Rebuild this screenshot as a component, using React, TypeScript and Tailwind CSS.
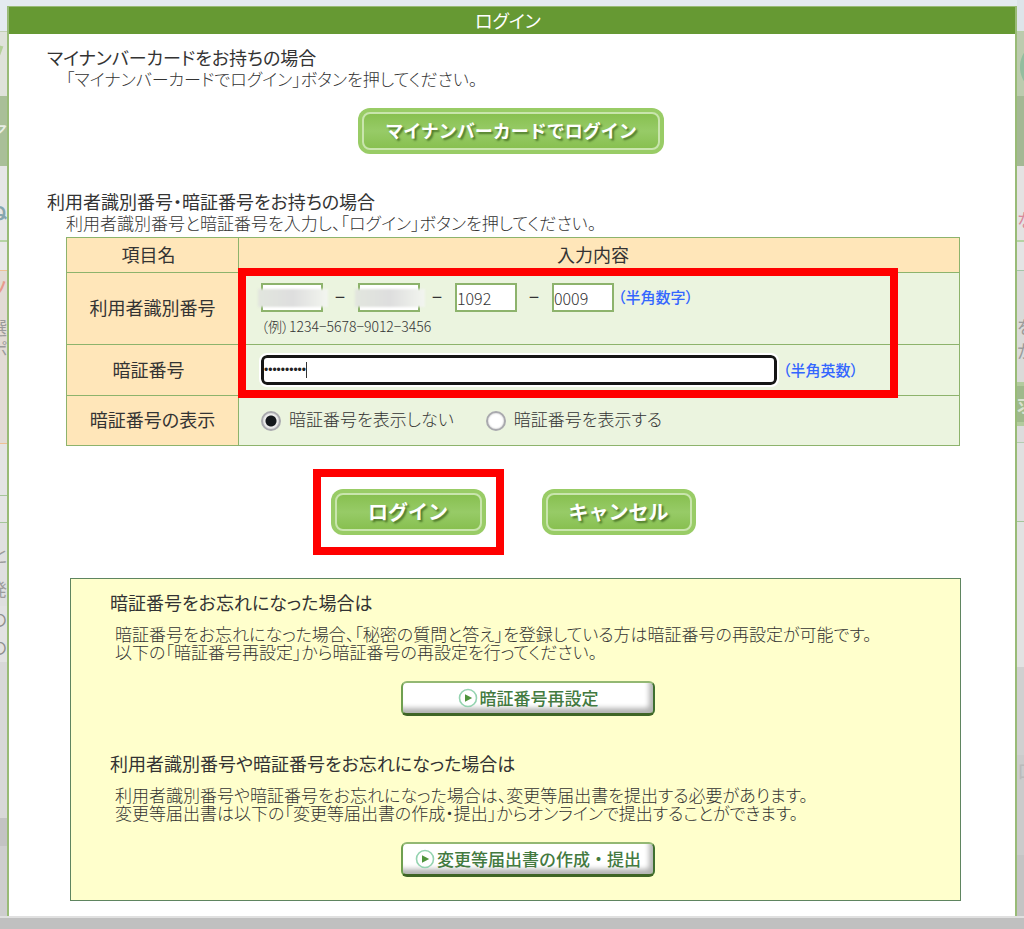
import type { ReactNode } from "react";

type Segment = { box: string; glyph?: string };

const leftEdge: Segment[] = [
  { box: "h-[31px] bg-[#e4ebf0]" },
  { box: "h-[65px] border-t border-[#c3cfb5] bg-[#dfe2da] text-[60px] text-[#b4cf98]", glyph: "ノ" },
  { box: "h-[70px] bg-[#a9bf98] text-[22px] text-[#e8eee4]", glyph: "ア" },
  { box: "h-[74px] bg-[#e6e6e6] pt-[18px] text-[20px] font-bold text-[#86a6ae]", glyph: "ぬ" },
  { box: "h-[30px] border-t-2 border-[#b5d3a4] bg-[#e8e8e8]" },
  { box: "h-[36px] border-t border-[#efc195] bg-[#e2dbd5] text-[24px] text-[#e89a8c]", glyph: "ノ" },
  { box: "h-[32px] bg-[#e2dbd5] pt-[10px] text-[18px] text-[#9a9a9a]", glyph: "選" },
  { box: "h-[22px] bg-[#e2dbd5] text-[18px] text-[#9a9a9a]", glyph: "ポ" },
  { box: "h-[83px] bg-[#e2dbd5]" },
  { box: "h-[52px] border-t border-[#efc195] bg-[#e4e4e4]" },
  { box: "h-[27px] border-t border-[#a5c59a] bg-[#e4e4e4]" },
  { box: "h-[48px] border-t border-[#a5c59a] bg-[#e0e0e0] pt-[16px] text-[17px] text-[#9c9c9c]", glyph: "と" },
  { box: "h-[36px] bg-[#dfdfdf] text-[17px] text-[#9c9c9c]", glyph: "発" },
  { box: "h-[24px] bg-[#e2e2e2] text-[17px] text-[#8f8f8f]", glyph: "の" },
  { box: "h-[32px] bg-[#e2e2e2] text-[17px] text-[#8f8f8f]", glyph: "の" },
  { box: "h-[156px] bg-[#d8d8d8]" },
  { box: "h-[28px] bg-[#c3c3c3]" },
  { box: "grow bg-[#cecece]" },
];

const rightEdge: Segment[] = [
  { box: "h-[31px] bg-[#dde4e9]" },
  { box: "h-[65px] border-t border-[#b9cfa8] bg-[#bccbae] text-[60px] text-[#93bd9f]", glyph: "●" },
  { box: "h-[70px] bg-[#a4b894]" },
  { box: "h-[74px] bg-[#e4e2e2] pt-[32px] text-[18px] text-[#d98a9c]", glyph: "な" },
  { box: "h-[30px] border-t-2 border-[#b5d3a4] bg-[#e4e4e4]" },
  { box: "h-[68px] border-t border-[#a5c5a8] bg-[#dadad8] pt-[42px] text-[18px] text-[#9a9a9a]", glyph: "を" },
  { box: "h-[44px] bg-[#dadad8] pb-[20px] text-[18px] text-[#9a9a9a]", glyph: "か" },
  { box: "h-[44px] border-y-4 border-[#b3cb9e] bg-[#9fb98c] text-[18px] font-bold text-[#d8e2d0]", glyph: "求" },
  { box: "h-[16px] bg-[#dcdcdc]" },
  { box: "h-[79px] border-t border-[#b5cbb0] bg-[#e0e0e0]" },
  { box: "h-[146px] border-t border-[#a5c59a] bg-[#e2e2e2]" },
  { box: "h-[88px] bg-[#d0d0d0]" },
  { box: "h-[32px] bg-[#cbcbcb] text-[20px] text-[#bababa]", glyph: "ロ" },
  { box: "h-[68px] bg-[#cbcbcb]" },
  { box: "grow bg-[#c4c4c4]" },
];

function Edge({ segments, side }: { segments: Segment[]; side: "left" | "right" }) {
  return (
    <div aria-hidden="true" className="flex w-[7px] shrink-0 flex-col overflow-hidden">
      {segments.map((s, i) => (
        <div
          key={i}
          className={`flex shrink-0 items-center overflow-hidden leading-none ${side === "left" ? "justify-end" : "justify-start"} ${s.box}`}
        >
          {s.glyph}
        </div>
      ))}
    </div>
  );
}

function GreenButton({ children, size }: { children: ReactNode; size: string }) {
  return (
    <button type="button" className={`h-[46px] rounded-xl bg-[#99cc66] p-1 ${size}`}>
      <span className="flex h-full items-center justify-center rounded-lg border-2 border-[#c9e5ad] bg-linear-to-b from-[#88c050] via-[#97cb67] to-[#88c050] pb-px font-bold text-white [text-shadow:2px_2px_2px_#4f7a2b]">
        {children}
      </span>
    </button>
  );
}

function PlateButton({ children }: { children: ReactNode }) {
  return (
    <button
      type="button"
      className="mx-auto flex h-[35px] w-[254px] items-center justify-center gap-[2px] rounded-md border-2 border-b-3 border-t-[#93b873] border-r-[#3f7030] border-b-[#3f6526] border-l-[#6fa050] bg-white text-[17px] leading-none font-medium text-[#437a40] shadow-[inset_-4px_-5px_5px_#b5b5b5]"
    >
      <svg viewBox="0 0 20 20" className="size-5" aria-hidden="true">
        <circle cx="10" cy="10" r="8.5" fill="#fff" stroke="#94d3b0" strokeWidth="1.6" />
        <path d="M7 6.2 14.2 10 7 13.8Z" fill="#4f943c" />
      </svg>
      <span className="pb-px">{children}</span>
    </button>
  );
}

function NumberBox({ label, value, masked }: { label: string; value: string; masked?: boolean }) {
  return (
    <span className="relative block">
      <input
        type="text"
        aria-label={label}
        defaultValue={value}
        className="block h-[29px] w-[62px] border-2 border-[#8db36c] bg-white text-[16px] text-[#333] outline-none"
      />
      {masked && (
        <span className="absolute top-[6px] -left-[3px] h-[18px] w-[70px] bg-linear-to-r from-[#e2e6de] via-[#dedede] to-[#f3f6f0] blur-[1px]" />
      )}
    </span>
  );
}

function Dash() {
  return <span className="w-[35px] pr-px pb-1 text-center text-[18px] leading-none font-normal">−</span>;
}

const radioClass =
  "mt-[2px] size-5 shrink-0 appearance-none rounded-full border-2 border-[#a9a9ae] bg-white shadow-[inset_0_0_2px_#bbb] checked:bg-[radial-gradient(circle,#14181c_0_5px,#f0f0f0_6px)]";

const rowHead = "border border-[#8db36c] bg-[#ffe6b9] p-0 pb-[2px] text-center text-[18px] font-normal";
const cell = "border border-[#8db36c] bg-[#ebf4df] p-0 pl-[22px] align-top";

export default function App() {
  return (
    <div className="flex min-h-screen flex-col bg-[#c0c0c0] font-['Noto_Sans_CJK_JP',sans-serif] text-[#333] [font-feature-settings:'palt']">
      <div className="flex bg-[#e4ebf0]">
        <Edge segments={leftEdge} side="left" />
        <main className="mt-[6px] min-w-0 flex-1 border-x-2 border-t border-[#99bb77] bg-white pb-[15px] font-light">
          <h1 className="h-[27px] bg-[#669933] pr-2 text-center text-[18px] leading-[27px] font-normal text-white">
            ログイン
          </h1>

          <section className="pt-[13px] pl-[38px]">
            <h2 className="text-[18px] leading-[21px] font-normal">マイナンバーカードをお持ちの場合</h2>
            <p className="pl-[19px] text-[17px] leading-[21px]">
              「マイナンバーカードでログイン」ボタンを押してください。
            </p>
          </section>
          <div className="mt-[19px] flex justify-center pr-[2px]">
            <GreenButton size="w-[306px] text-[18px] [font-feature-settings:normal]">
              マイナンバーカードでログイン
            </GreenButton>
          </div>

          <section className="mt-[37px] pr-[55px] pl-[38px]">
            <h2 className="text-[18px] leading-[21px] font-normal">
              利用者識別番号・暗証番号をお持ちの場合
            </h2>
            <p className="pl-[19px] text-[17px] leading-[21px]">
              利用者識別番号と暗証番号を入力し、「ログイン」ボタンを押してください。
            </p>
            <div className="relative mt-[4px] ml-[19px]">
              <table className="w-full border-collapse">
                <thead>
                  <tr className="h-[35px]">
                    <th className={`w-[172px] ${rowHead}`}>
                      <span className="pr-2">項目名</span>
                    </th>
                    <th className={rowHead}>
                      <span className="pr-3">入力内容</span>
                    </th>
                  </tr>
                </thead>
                <tbody>
                  <tr className="h-[72px]">
                    <th scope="row" className={rowHead}>利用者識別番号</th>
                    <td className={cell}>
                      <div className="mt-[10px] flex items-center">
                        <NumberBox label="利用者識別番号 1" value="" masked />
                        <Dash />
                        <NumberBox label="利用者識別番号 2" value="" masked />
                        <Dash />
                        <NumberBox label="利用者識別番号 3" value="1092" />
                        <Dash />
                        <NumberBox label="利用者識別番号 4" value="0009" />
                        <span className="pb-[2px] pl-1 text-[15px] leading-none font-medium text-[#3366ff]">（半角数字）</span>
                      </div>
                      <p className="mt-[4px] text-[14px] leading-[20px]">（例）1234−5678−9012−3456</p>
                    </td>
                  </tr>
                  <tr className="h-[51px]">
                    <th scope="row" className={rowHead}>
                      <label htmlFor="pin" className="pr-2">暗証番号</label>
                    </th>
                    <td className={cell}>
                      <div className="mt-[10px] flex items-center pr-[98px]">
                        <span className="relative block flex-1">
                          <input
                            id="pin"
                            type="password"
                            defaultValue="abcdefghij"
                            className="block h-[30px] w-full rounded-md border-[3px] border-[#161616] bg-white font-['Liberation_Sans',sans-serif] text-[12px] text-[#222] outline-2 outline-white"
                          />
                          <span className="absolute top-[7px] left-[45px] h-[16px] w-px bg-[#333]" />
                        </span>
                        <span className="w-[84px] shrink-0 pb-[2px] pl-[6px] text-[15px] leading-none font-medium text-[#3366ff]">
                          （半角英数）
                        </span>
                      </div>
                    </td>
                  </tr>
                  <tr className="h-[50px]">
                    <th scope="row" className={rowHead}>暗証番号の表示</th>
                    <td className={cell}>
                      <div className="flex h-[48px] items-center gap-[32px] text-[17px]">
                        <label className="flex items-center gap-2">
                          <input type="radio" name="show" defaultChecked className={radioClass} />
                          <span className="pb-[2px]">暗証番号を表示しない</span>
                        </label>
                        <label className="flex items-center gap-2">
                          <input type="radio" name="show" className={radioClass} />
                          <span className="pb-[2px]">暗証番号を表示する</span>
                        </label>
                      </div>
                    </td>
                  </tr>
                </tbody>
              </table>
              <div className="pointer-events-none absolute top-[31px] right-[62px] left-[172px] h-[130px] border-8 border-[#ff0000]" />
            </div>
          </section>

          <div className="mt-[23px] flex items-center justify-center gap-[38px] pr-[16px]">
            <div className="border-8 border-[#ff0000] px-[10px] py-[12px]">
              <GreenButton size="w-[155px] text-[20px] [font-feature-settings:normal]">ログイン</GreenButton>
            </div>
            <GreenButton size="w-[154px] text-[20px] [font-feature-settings:normal]">キャンセル</GreenButton>
          </div>

          <section className="mt-[23px] mr-[54px] ml-[61px] border border-[#5f8560] bg-[#ffffcc] pb-[23px]">
            <div className="pt-[12px] pl-[39px]">
              <h2 className="text-[18px] leading-[22px] font-normal">暗証番号をお忘れになった場合は</h2>
              <p className="mt-[12px] pl-[5px] text-[17px] leading-[18px]">
                暗証番号をお忘れになった場合、「秘密の質問と答え」を登録している方は暗証番号の再設定が可能です。
                <br />
                以下の「暗証番号再設定」から暗証番号の再設定を行ってください。
              </p>
            </div>
            <div className="mt-[20px] pr-[29px] pl-[54px]">
              <PlateButton>暗証番号再設定</PlateButton>
            </div>
            <div className="mt-[36px] pl-[39px]">
              <h2 className="text-[18px] leading-[22px] font-normal">
                利用者識別番号や暗証番号をお忘れになった場合は
              </h2>
              <p className="mt-[12px] pl-[5px] text-[17px] leading-[18px]">
                利用者識別番号や暗証番号をお忘れになった場合は、変更等届出書を提出する必要があります。
                <br />
                変更等届出書は以下の「変更等届出書の作成・提出」からオンラインで提出することができます。
              </p>
            </div>
            <div className="mt-[20px] pr-[29px] pl-[54px] [font-feature-settings:normal]">
              <PlateButton>変更等届出書の作成・提出</PlateButton>
            </div>
          </section>
        </main>
        <Edge segments={rightEdge} side="right" />
      </div>
      <div className="h-[2px] bg-[#e0e0e0]" />
    </div>
  );
}
